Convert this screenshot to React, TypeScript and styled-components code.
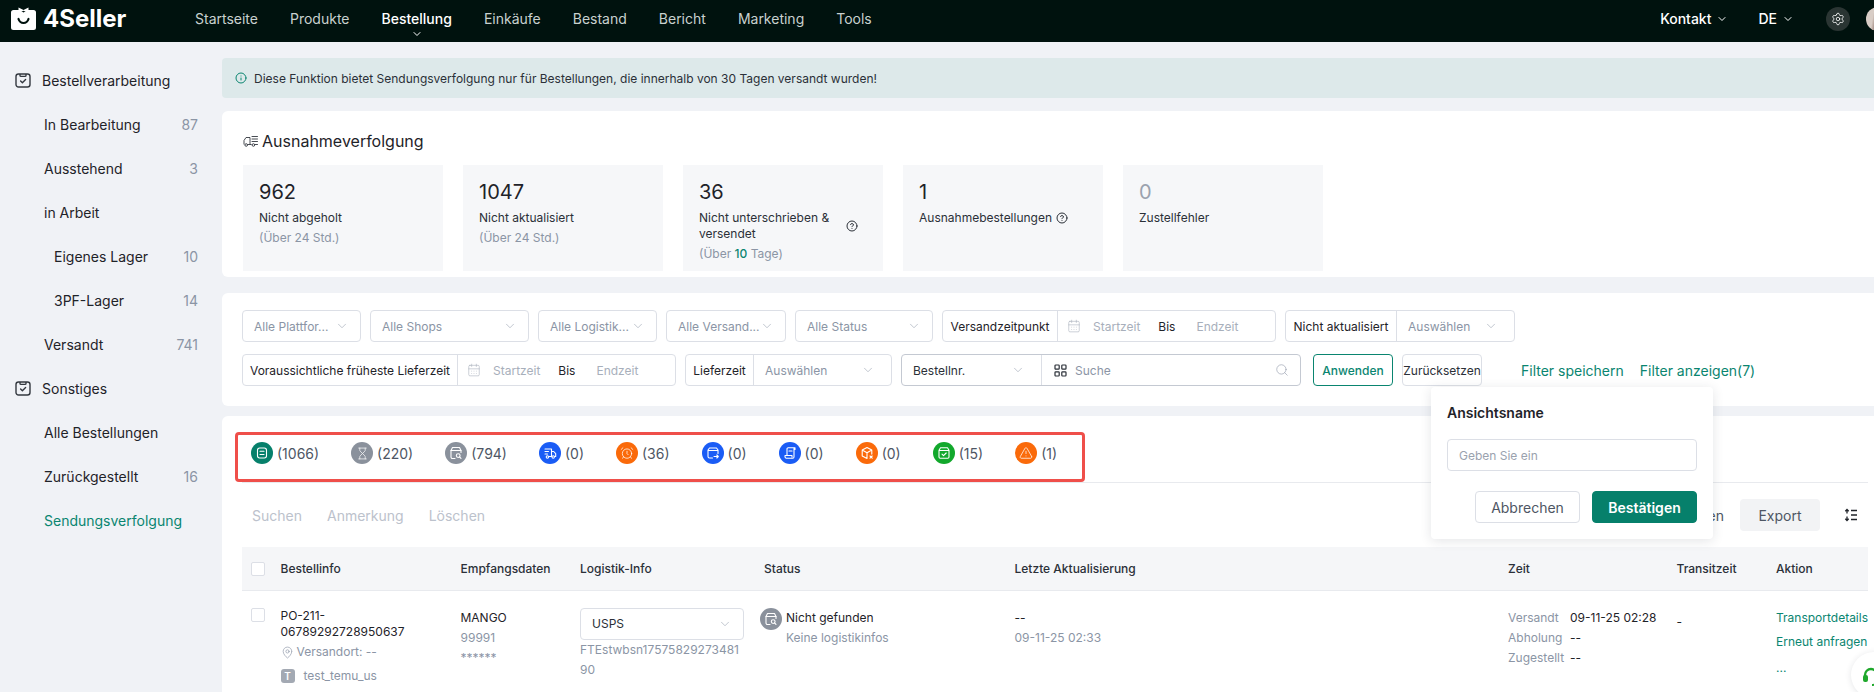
import React from 'react';
import styled, { createGlobalStyle } from 'styled-components';
import { ChevronDown, CircleHelp, Info, MapPin, Search, Settings, Hourglass, AlarmClock, TriangleAlert, CalendarDays } from 'lucide-react';

const GlobalStyle = createGlobalStyle`
  html, body { margin: 0; padding: 0; height: 692px; overflow: hidden; background: #f0f2f6; }
  body { font-family: Inter, "Liberation Sans", sans-serif; color: #1f2329; }
  * { box-sizing: border-box; }
`;

const Page = styled.div`
  width: 1874px;
  height: 692px;
  overflow: hidden;
  position: relative;
`;

const TopBar = styled.header`
  height: 42px;
  background: #00120e;
  color: #fff;
  display: flex;
  align-items: flex-start;
  padding: 7px 0 0 11px;
  font-size: 14px;
`;

const Logo = styled.div`
  display: flex;
  align-items: center;
  gap: 7px;
  width: 184px;
  height: 23px;
  font-size: 24px;
  font-weight: 700;
`;

const NavList = styled.nav`
  display: flex;
  gap: 32px;
  height: 23px;
  align-items: center;
  flex: 1;
`;

const NavItem = styled.span<{ $active?: boolean }>`
  position: relative;
  color: ${p => (p.$active ? '#fff' : '#c9d1cf')};
  font-weight: ${p => (p.$active ? 500 : 400)};
  svg { position: absolute; left: 50%; top: 18px; margin-left: -6px; }
`;

const TopRight = styled.div`
  display: flex;
  align-items: center;
  height: 23px;
  margin-right: -16px;
`;

const TopMenu = styled.span<{ $gap: number }>`
  display: flex;
  align-items: center;
  gap: 5px;
  margin-right: ${p => p.$gap}px;
  font-weight: 500;
`;

const RoundIcon = styled.span`
  width: 24px;
  height: 24px;
  border-radius: 50%;
  background: #2a3533;
  display: flex;
  align-items: center;
  justify-content: center;
  margin-right: 16px;
`;

const Avatar = styled.span`
  width: 24px;
  height: 24px;
  border-radius: 50%;
  background: linear-gradient(100deg, #d8cdc6 0 30%, #6d4a42 55%, #2c1c18);
`;

const Body = styled.div`
  display: flex;
  height: 650px;
`;

const Sidebar = styled.aside`
  width: 222px;
  flex: none;
  padding: 16px 24px 0 15px;
  font-size: 14px;
`;

const SideRow = styled.div<{ $indent?: number; $active?: boolean }>`
  height: 44px;
  display: flex;
  align-items: center;
  justify-content: space-between;
  padding-left: ${p => p.$indent ?? 0}px;
  color: ${p => (p.$active ? '#0a8570' : '#1f2329')};
`;

const SideHead = styled.span`
  display: flex;
  align-items: center;
  gap: 11px;
`;

const SideCount = styled.span`
  color: #8b95a5;
`;

const Main = styled.main`
  flex: 1;
  min-width: 0;
  padding-top: 16px;
  display: flex;
  flex-direction: column;
`;

const Notice = styled.div`
  height: 40px;
  flex: none;
  background: #dde9ea;
  border-radius: 4px 0 0 4px;
  display: flex;
  align-items: center;
  gap: 7px;
  padding-left: 13px;
  font-size: 12px;
  color: #2b3038;
`;

const Card = styled.section<{ $top: number; $height: number }>`
  margin-top: ${p => p.$top}px;
  height: ${p => p.$height}px;
  background: #fff;
  border-radius: 6px 0 0 6px;
  flex: none;
`;

const StatsCard = styled(Card)`
  padding: 19px 21px 0;
`;

const CardTitle = styled.h2`
  margin: 0 0 13px;
  height: 22px;
  display: flex;
  align-items: center;
  gap: 3px;
  font-size: 16px;
  font-weight: 400;
`;

const StatRow = styled.div`
  display: flex;
  gap: 20px;
`;

const StatBox = styled.div`
  width: 200px;
  height: 106px;
  background: #f6f7f9;
  padding: 14px 16px 0;
`;

const StatNum = styled.div<{ $muted?: boolean }>`
  font-size: 20px;
  line-height: 26px;
  color: ${p => (p.$muted ? '#9aa2ae' : '#1f2329')};
`;

const StatLabel = styled.div`
  margin-top: 5px;
  font-size: 12px;
  line-height: 16px;
  color: #2b3038;
  display: flex;
  align-items: center;
  gap: 4px;
`;

const WrappedLabel = styled.span`
  width: 143px;
  flex: none;
`;

const StatSub = styled.div`
  margin-top: 4px;
  font-size: 12px;
  line-height: 16px;
  color: #8b95a5;
  b { color: #0a8570; font-weight: 500; }
`;

const FilterCard = styled(Card)`
  padding: 17px 0 0 20px;
  display: flex;
  flex-direction: column;
  gap: 12px;
`;

const FilterRow = styled.div`
  display: flex;
  gap: 9px;
  align-items: center;
  font-size: 12px;
`;

const Field = styled.div<{ $w: number; $strong?: boolean }>`
  width: ${p => p.$w}px;
  height: 32px;
  flex: none;
  display: flex;
  align-items: center;
  border: 1px solid ${p => (p.$strong ? '#c4c9d2' : '#dcdfe6')};
  border-radius: 4px;
  background: #fff;
  white-space: nowrap;
`;

const SelectBox = styled(Field)`
  justify-content: space-between;
  padding: 0 11px;
  color: #8b95a5;
`;

const Prefix = styled.span<{ $w: number }>`
  width: ${p => p.$w}px;
  height: 100%;
  flex: none;
  display: flex;
  align-items: center;
  justify-content: center;
  border-right: 1px solid #dcdfe6;
  color: #1f2329;
`;

const Fill = styled.span`
  flex: 1;
  display: flex;
  align-items: center;
  justify-content: space-between;
  padding: 0 16px 0 11px;
  color: #8b95a5;
`;

const OrderFill = styled(Fill)`
  color: #2b3038;
`;

const DateFill = styled.span`
  flex: 1;
  display: flex;
  align-items: center;
  padding-left: 9px;
  color: #a8afbb;
`;

const DateWord = styled.span<{ $left: number }>`
  margin-left: ${p => p.$left}px;
`;

const BisWord = styled.span<{ $left: number }>`
  margin-left: ${p => p.$left}px;
  color: #1f2329;
`;

const SearchFill = styled.span`
  flex: 1;
  display: flex;
  align-items: center;
  gap: 8px;
  padding: 0 11px 0 12px;
  color: #8b95a5;
  svg:last-child { margin-left: auto; }
`;

const FilterButton = styled.button<{ $primary?: boolean; $left?: number }>`
  width: 80px;
  height: 32px;
  flex: none;
  padding: 0;
  margin-left: ${p => p.$left ?? 0}px;
  font: inherit;
  font-weight: ${p => (p.$primary ? 500 : 400)};
  background: #fff;
  border-radius: 4px;
  border: 1px solid ${p => (p.$primary ? '#0a8570' : '#dcdfe6')};
  color: ${p => (p.$primary ? '#0a8570' : '#2b3038')};
`;

const FilterLink = styled.span<{ $left: number }>`
  margin-left: ${p => p.$left}px;
  font-size: 14px;
  color: #0a8570;
  white-space: nowrap;
`;

const TableCard = styled(Card)`
  padding: 16px 6px 0 20px;
`;

const TabBox = styled.div`
  width: 850px;
  margin-left: -7px;
  height: 50px;
  border: 3px solid #ef4f4a;
  border-radius: 4px;
  display: flex;
  align-items: flex-start;
  gap: 32px;
  padding: 7px 0 0 13px;
  font-size: 14px;
  color: #4e5664;
`;

const Tab = styled.span`
  display: flex;
  align-items: center;
  gap: 4px;
  height: 22px;
`;

const TabIcon = styled.span<{ $bg: string }>`
  width: 22px;
  height: 22px;
  flex: none;
  border-radius: 50%;
  background: ${p => p.$bg};
  color: #fff;
  display: flex;
  align-items: center;
  justify-content: center;
`;

const Divider = styled.div`
  height: 1px;
  background: #e8eaee;
`;

const ActionBar = styled.div`
  height: 64px;
  display: flex;
  align-items: center;
  font-size: 14px;
  padding-left: 10px;
  gap: 25px;
`;

const GhostAction = styled.span`
  color: #bcc2cc;
`;

const RightActions = styled.div`
  margin-left: auto;
  display: flex;
  align-items: center;
  color: #4e5664;
`;

const ExportButton = styled.span`
  width: 80px;
  height: 32px;
  margin: 0 24px 0 16px;
  background: #f2f3f5;
  border-radius: 4px;
  display: flex;
  align-items: center;
  justify-content: center;
`;

const SortIcon = styled.span`
  margin-right: 10px;
  display: flex;
  color: #1f2329;
`;

const TableGrid = styled.div`
  display: grid;
  grid-template-columns: 38.5px 180px 119.5px 180px 254.5px 493.5px 168.5px 99.5px 92px;
  font-size: 12px;
`;

const HeadCell = styled.div<{ $pad?: number }>`
  height: 44px;
  background: #f5f6f8;
  border-bottom: 1px solid #e8eaee;
  display: flex;
  align-items: center;
  font-weight: 500;
  color: #2b3038;
  padding-left: ${p => p.$pad ?? 0}px;
  white-space: nowrap;
`;

const Cell = styled.div`
  padding-top: 17px;
  height: 110px;
  line-height: 20px;
`;

const Check = styled.span`
  display: block;
  width: 14px;
  height: 14px;
  margin-left: 9px;
  border: 1px solid #dcdfe6;
  border-radius: 2px;
  background: #fff;
`;

const OrderNo = styled.div`
  line-height: 16px;
  padding-bottom: 2px;
`;

const TransitDash = styled.div`
  padding-top: 4px;
`;

const Gray = styled.div`
  color: #8b95a5;
`;

const PlaceLine = styled(Gray)`
  display: flex;
  align-items: center;
  gap: 3px;
  line-height: 20px;
`;

const ShopLine = styled(Gray)`
  display: flex;
  align-items: center;
  gap: 9px;
  margin-top: 4px;
`;

const ShopBadge = styled.span`
  width: 14px;
  height: 14px;
  border-radius: 3px;
  background: #a3a9b3;
  color: #fff;
  font-size: 10px;
  font-weight: 600;
  display: flex;
  align-items: center;
  justify-content: center;
`;

const Carrier = styled(SelectBox)`
  color: #2b3038;
  margin-bottom: 0;
`;

const StatusWrap = styled.div`
  display: flex;
  gap: 4px;
`;

const TimeGrid = styled.div`
  display: grid;
  grid-template-columns: 62px 1fr;
`;

const ActionLink = styled.div<{ $gap?: number }>`
  color: #0a8570;
  margin-top: ${p => p.$gap ?? 0}px;
  white-space: nowrap;
`;

const Popover = styled.div`
  position: absolute;
  left: 1431px;
  top: 387px;
  width: 282px;
  height: 152px;
  background: #fff;
  border-radius: 4px;
  box-shadow: 0 2px 12px rgba(30, 40, 60, 0.12);
  padding: 16px;
`;

const PopoverTitle = styled.div`
  font-size: 14px;
  font-weight: 600;
  line-height: 20px;
  margin-bottom: 16px;
`;

const PopoverInput = styled.div`
  height: 32px;
  width: 250px;
  border: 1px solid #dcdfe6;
  border-radius: 4px;
  display: flex;
  align-items: center;
  padding-left: 11px;
  font-size: 12px;
  color: #9aa2ae;
`;

const PopoverButtons = styled.div`
  margin-top: 20px;
  display: flex;
  justify-content: flex-end;
  gap: 12px;
  width: 250px;
`;

const PopoverButton = styled.button<{ $primary?: boolean }>`
  width: 105px;
  height: 32px;
  padding: 0;
  font: inherit;
  font-size: 14px;
  font-weight: ${p => (p.$primary ? 600 : 400)};
  border-radius: 4px;
  background: ${p => (p.$primary ? '#06806b' : '#fff')};
  color: ${p => (p.$primary ? '#fff' : '#4e5664')};
  border: 1px solid ${p => (p.$primary ? '#06806b' : '#dcdfe6')};
`;

const ChatBubble = styled.div`
  position: absolute;
  left: 1851px;
  top: 652px;
  width: 46px;
  height: 46px;
  border-radius: 50%;
  background: #fff;
  box-shadow: 0 1px 6px rgba(30, 40, 60, 0.12);
  padding: 15px 0 0 11px;
`;

const Clipboard = () => (
  <svg width="16" height="16" viewBox="0 0 16 16" fill="none" stroke="#33383f" strokeWidth="1.4">
    <rect x="1" y="2" width="14" height="13" rx="2.5" />
    <path d="M5 2v1.4c0 .6.5 1 1 1h4c.5 0 1-.4 1-1V2" />
    <path d="M5.6 9l1.8 1.7L10.6 7.6" strokeLinecap="round" strokeLinejoin="round" />
  </svg>
);

const LogoMark = () => (
  <svg width="25" height="23" viewBox="0 0 25 23">
    <path d="M2.5 3H8l4.5 2.5L17 3h5.5A2.5 2.5 0 0 1 25 5.5V20.5a2.5 2.5 0 0 1-2.5 2.5h-20A2.5 2.5 0 0 1 0 20.5V5.5A2.5 2.5 0 0 1 2.5 3z" fill="#fff" />
    <path d="M7.5 0.5l5 2.5 5-2.5v5.5l-5-2.2-5 2.2z" fill="#fff" />
    <path d="M7.5 12c1 3 3 4 5 4s4-1 5-4" fill="none" stroke="#00120e" strokeWidth="2.2" strokeLinecap="round" />
  </svg>
);

const TitleIcon = () => (
  <svg width="16" height="16" viewBox="0 0 16 16" fill="none" stroke="#33383f" strokeWidth="0.9">
    <path d="M1 11.5V7.5L3 4.5h4v7H4.4M7 11.5h1.6" />
    <circle cx="3.2" cy="12" r="1.3" />
    <circle cx="10.4" cy="12" r="1.3" />
    <path d="M9 3.5h5.5M9 6h5.5M9 8.5h5.5M12 11.5h2.5" strokeLinecap="round" />
  </svg>
);

const ScanCode = () => (
  <svg width="13" height="13" viewBox="0 0 13 13" fill="none" stroke="#2b3038" strokeWidth="1.2">
    <rect x="1" y="1" width="4.2" height="4.2" rx="0.8" />
    <rect x="7.8" y="1" width="4.2" height="4.2" rx="0.8" />
    <rect x="1" y="7.8" width="4.2" height="4.2" rx="0.8" />
    <rect x="7.8" y="7.8" width="4.2" height="4.2" rx="0.8" />
  </svg>
);

const SortGlyph = () => (
  <svg width="14" height="14" viewBox="0 0 14 14" fill="none" stroke="#1f2329" strokeWidth="1.3">
    <path d="M3 1.5v4M1.3 3.2L3 1.5l1.7 1.7M3 12.5v-4M1.3 10.8L3 12.5l1.7-1.7" />
    <path d="M7 2.5h6M7 7h6M7 11.5h6" />
  </svg>
);

const Chevron = ({ color = '#a8afbb', size = 14 }: { color?: string; size?: number }) => (
  <ChevronDown size={size} color={color} strokeWidth={1.2} />
);

// white line glyphs on the coloured round status icons
const Glyph = ({ children }: { children: React.ReactNode }) => (
  <svg width="14" height="14" viewBox="0 0 14 14" fill="none" stroke="#fff" strokeWidth="1.1" strokeLinecap="round" strokeLinejoin="round">
    {children}
  </svg>
);

const NotFoundGlyph = () => (
  <Glyph>
    <path d="M6 12.5H3.5A1.5 1.5 0 0 1 2 11V4.5L3.5 1.5h7L12 4.5v2" />
    <path d="M2 4.5h10" />
    <circle cx="9.2" cy="9.6" r="1.9" />
    <path d="M10.6 11l1.4 1.4" />
  </Glyph>
);

const tabs: { bg: string; icon: React.ReactNode; count: string }[] = [
  {
    bg: '#06806b',
    icon: <Glyph><rect x="2.5" y="2" width="9" height="10" rx="2.2" /><path d="M5 5.3h4M5 8.5h4" /></Glyph>,
    count: '(1066)',
  },
  { bg: '#8a919c', icon: <Hourglass size={13} strokeWidth={1.3} />, count: '(220)' },
  { bg: '#8a919c', icon: <NotFoundGlyph />, count: '(794)' },
  {
    bg: '#1a5cf5',
    icon: <Glyph><path d="M2 3h6.5v7.5H6M2 5.5h3.5M2 8h2.5M8.5 5.5h2.2l2 2.2v2.8h-1" /><circle cx="4.4" cy="11" r="1.2" /><circle cx="10.2" cy="11" r="1.2" /></Glyph>,
    count: '(0)',
  },
  { bg: '#fa6a0a', icon: <AlarmClock size={14} strokeWidth={1.3} />, count: '(36)' },
  {
    bg: '#1a5cf5',
    icon: <Glyph><path d="M6.5 12H3.5A1.5 1.5 0 0 1 2 10.5V4l1.5-2h7L12 4v3.5M2 4.5h10" /><path d="M8 10.5h4.2M10.8 9l1.5 1.5-1.5 1.5" /></Glyph>,
    count: '(0)',
  },
  {
    bg: '#1a5cf5',
    icon: <Glyph><path d="M4 9.5V3a1.2 1.2 0 0 1 1.2-1.2H12v1.7M11 1.8V11a1.2 1.2 0 0 1-1.2 1.2H3.2A1.4 1.4 0 0 1 2 10.8V9.5h7v1.5" /><path d="M6 5h3" /></Glyph>,
    count: '(0)',
  },
  {
    bg: '#fa6a0a',
    icon: <Glyph><path d="M7 1.5l4.8 2.6v4M7 1.5L2.2 4.1v5.8L7 12.5M2.2 4.1L7 6.8l4.8-2.7M7 6.8v5.7" /><path d="M10 10l2.2 2.2M12.2 10L10 12.2" /></Glyph>,
    count: '(0)',
  },
  {
    bg: '#12a82c',
    icon: <Glyph><path d="M3.5 1.8h7l1.5 2.4V11a1.2 1.2 0 0 1-1.2 1.2H3.2A1.2 1.2 0 0 1 2 11V4.2zM2 4.5h10" /><path d="M5 8.2l1.5 1.5L9.2 7" /></Glyph>,
    count: '(15)',
  },
  { bg: '#fa6a0a', icon: <TriangleAlert size={14} strokeWidth={1.3} />, count: '(1)' },
];

const DateRange = () => (
  <DateFill>
    <CalendarDays size={14} strokeWidth={1} color="#a8afbb" />
    <DateWord $left={12}>Startzeit</DateWord>
    <BisWord $left={18}>Bis</BisWord>
    <DateWord $left={21}>Endzeit</DateWord>
  </DateFill>
);

export default function App() {
  return (
    <Page>
      <GlobalStyle />
      <TopBar>
        <Logo><LogoMark />4Seller</Logo>
        <NavList>
          <NavItem>Startseite</NavItem>
          <NavItem>Produkte</NavItem>
          <NavItem $active>Bestellung<ChevronDown size={12} color="#fff" /></NavItem>
          <NavItem>Einkäufe</NavItem>
          <NavItem>Bestand</NavItem>
          <NavItem>Bericht</NavItem>
          <NavItem>Marketing</NavItem>
          <NavItem>Tools</NavItem>
        </NavList>
        <TopRight>
          <TopMenu $gap={30}>Kontakt <ChevronDown size={12} /></TopMenu>
          <TopMenu $gap={32}>DE <ChevronDown size={12} /></TopMenu>
          <RoundIcon><Settings size={14} strokeWidth={1.4} /></RoundIcon>
          <Avatar />
        </TopRight>
      </TopBar>
      <Body>
        <Sidebar>
          <SideRow><SideHead><Clipboard />Bestellverarbeitung</SideHead></SideRow>
          <SideRow $indent={29}>In Bearbeitung<SideCount>87</SideCount></SideRow>
          <SideRow $indent={29}>Ausstehend<SideCount>3</SideCount></SideRow>
          <SideRow $indent={29}>in Arbeit</SideRow>
          <SideRow $indent={39}>Eigenes Lager<SideCount>10</SideCount></SideRow>
          <SideRow $indent={39}>3PF-Lager<SideCount>14</SideCount></SideRow>
          <SideRow $indent={29}>Versandt<SideCount>741</SideCount></SideRow>
          <SideRow><SideHead><Clipboard />Sonstiges</SideHead></SideRow>
          <SideRow $indent={29}>Alle Bestellungen</SideRow>
          <SideRow $indent={29}>Zurückgestellt<SideCount>16</SideCount></SideRow>
          <SideRow $indent={29} $active>Sendungsverfolgung</SideRow>
        </Sidebar>
        <Main>
          <Notice>
            <Info size={12} color="#0a8570" />
            Diese Funktion bietet Sendungsverfolgung nur für Bestellungen, die innerhalb von 30 Tagen versandt wurden!
          </Notice>
          <StatsCard $top={13} $height={166}>
            <CardTitle><TitleIcon />Ausnahmeverfolgung</CardTitle>
            <StatRow>
              <StatBox>
                <StatNum>962</StatNum>
                <StatLabel>Nicht abgeholt</StatLabel>
                <StatSub>(Über 24 Std.)</StatSub>
              </StatBox>
              <StatBox>
                <StatNum>1047</StatNum>
                <StatLabel>Nicht aktualisiert</StatLabel>
                <StatSub>(Über 24 Std.)</StatSub>
              </StatBox>
              <StatBox>
                <StatNum>36</StatNum>
                <StatLabel>
                  <WrappedLabel>Nicht unterschrieben &amp;<br />versendet</WrappedLabel>
                  <CircleHelp size={12} />
                </StatLabel>
                <StatSub>(Über <b>10</b> Tage)</StatSub>
              </StatBox>
              <StatBox>
                <StatNum>1</StatNum>
                <StatLabel>Ausnahmebestellungen<CircleHelp size={12} /></StatLabel>
              </StatBox>
              <StatBox>
                <StatNum $muted>0</StatNum>
                <StatLabel>Zustellfehler</StatLabel>
              </StatBox>
            </StatRow>
          </StatsCard>
          <FilterCard $top={16} $height={113}>
            <FilterRow>
              <SelectBox $w={119}>Alle Plattfor...<Chevron /></SelectBox>
              <SelectBox $w={159}>Alle Shops<Chevron /></SelectBox>
              <SelectBox $w={119}>Alle Logistik...<Chevron /></SelectBox>
              <SelectBox $w={120}>Alle Versand...<Chevron /></SelectBox>
              <SelectBox $w={138}>Alle Status<Chevron /></SelectBox>
              <Field $w={334}><Prefix $w={115}>Versandzeitpunkt</Prefix><DateRange /></Field>
              <Field $w={230}><Prefix $w={111}>Nicht aktualisiert</Prefix><Fill>Auswählen<Chevron /></Fill></Field>
            </FilterRow>
            <FilterRow>
              <Field $w={434}><Prefix $w={215}>Voraussichtliche früheste Lieferzeit</Prefix><DateRange /></Field>
              <Field $w={207}><Prefix $w={68}>Lieferzeit</Prefix><Fill>Auswählen<Chevron /></Fill></Field>
              <Field $w={400} $strong>
                <Prefix $w={140}>
                  <OrderFill>Bestellnr.<Chevron /></OrderFill>
                </Prefix>
                <SearchFill><ScanCode />Suche<Search size={14} strokeWidth={1} /></SearchFill>
              </Field>
              <FilterButton $primary $left={3}>Anwenden</FilterButton>
              <FilterButton>Zurücksetzen</FilterButton>
              <FilterLink $left={30}>Filter speichern</FilterLink>
              <FilterLink $left={7}>Filter anzeigen(7)</FilterLink>
            </FilterRow>
          </FilterCard>
          <TableCard $top={10} $height={300}>
            <TabBox>
              {tabs.map((t, i) => (
                <Tab key={i}><TabIcon $bg={t.bg}>{t.icon}</TabIcon>{t.count}</Tab>
              ))}
            </TabBox>
            <Divider />
            <ActionBar>
              <GhostAction>Suchen</GhostAction>
              <GhostAction>Anmerkung</GhostAction>
              <GhostAction>Löschen</GhostAction>
              <RightActions>
                en
                <ExportButton>Export</ExportButton>
                <SortIcon><SortGlyph /></SortIcon>
              </RightActions>
            </ActionBar>
            <TableGrid>
              <HeadCell><Check /></HeadCell>
              <HeadCell>Bestellinfo</HeadCell>
              <HeadCell>Empfangsdaten</HeadCell>
              <HeadCell>Logistik-Info</HeadCell>
              <HeadCell $pad={4}>Status</HeadCell>
              <HeadCell>Letzte Aktualisierung</HeadCell>
              <HeadCell>Zeit</HeadCell>
              <HeadCell>Transitzeit</HeadCell>
              <HeadCell>Aktion</HeadCell>

              <Cell><Check /></Cell>
              <Cell>
                <OrderNo>PO-211-<br />06789292728950637</OrderNo>
                <PlaceLine><MapPin size={13} strokeWidth={1.2} />Versandort: --</PlaceLine>
                <ShopLine><ShopBadge>T</ShopBadge>test_temu_us</ShopLine>
              </Cell>
              <Cell>
                MANGO
                <Gray>99991</Gray>
                <Gray>******</Gray>
              </Cell>
              <Cell>
                <Carrier $w={164}>USPS<Chevron /></Carrier>
                <Gray>FTEstwbsn17575829273481<br />90</Gray>
              </Cell>
              <Cell>
                <StatusWrap>
                  <TabIcon $bg="#8a919c"><NotFoundGlyph /></TabIcon>
                  <div>Nicht gefunden<Gray>Keine logistikinfos</Gray></div>
                </StatusWrap>
              </Cell>
              <Cell>
                --
                <Gray>09-11-25 02:33</Gray>
              </Cell>
              <Cell>
                <TimeGrid>
                  <Gray>Versandt</Gray><span>09-11-25 02:28</span>
                  <Gray>Abholung</Gray><span>--</span>
                  <Gray>Zugestellt</Gray><span>--</span>
                </TimeGrid>
              </Cell>
              <Cell><TransitDash>-</TransitDash></Cell>
              <Cell>
                <ActionLink>Transportdetails</ActionLink>
                <ActionLink $gap={4}>Erneut anfragen</ActionLink>
                <ActionLink $gap={6}>...</ActionLink>
              </Cell>
            </TableGrid>
          </TableCard>
        </Main>
      </Body>
      <Popover>
        <PopoverTitle>Ansichtsname</PopoverTitle>
        <PopoverInput>Geben Sie ein</PopoverInput>
        <PopoverButtons>
          <PopoverButton>Abbrechen</PopoverButton>
          <PopoverButton $primary>Bestätigen</PopoverButton>
        </PopoverButtons>
      </Popover>
      <ChatBubble>
        <svg width="20" height="20" viewBox="0 0 20 20" fill="none" stroke="#1fa82c">
          <path d="M3 11V8a6 6 0 0 1 12 0v3" strokeWidth="2.4" />
          <rect x="1" y="8" width="5" height="7" rx="2" fill="#1fa82c" stroke="none" />
          <path d="M14 14c0 3-2 4-4 4" strokeWidth="1.8" />
        </svg>
      </ChatBubble>
    </Page>
  );
}
